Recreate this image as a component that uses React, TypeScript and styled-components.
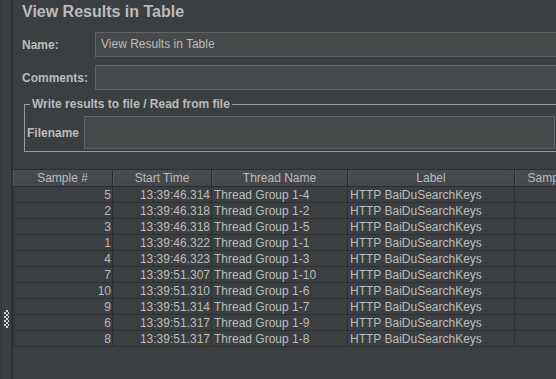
import React from 'react';
import styled, { createGlobalStyle } from 'styled-components';

const GlobalStyle = createGlobalStyle`
  html, body {
    margin: 0;
    padding: 0;
    background: #3c3f41;
  }
  body {
    font-family: "Liberation Sans", Arial, sans-serif;
    font-size: 12px;
    color: #bbbbbb;
  }
`;

const Window = styled.div`
  display: flex;
  width: 100vw;
  height: 100vh;
  overflow: hidden;
  background: #3c3f41;
`;

const Splitter = styled.div`
  flex: 0 0 13px;
  border-left: 2px solid #37393b;
  border-right: 2px solid #2d2f31;
  display: flex;
  justify-content: center;
  padding-top: 310px;
  box-sizing: border-box;
`;

const Grip = styled.div`
  width: 5px;
  height: 18px;
  background: repeating-conic-gradient(#d6d6d6 0 25%, #3c3f41 0 50%) 0 0 / 4px 4px;
`;

const Main = styled.div`
  flex: 1;
  min-width: 0;
  display: flex;
  flex-direction: column;
  overflow: hidden;
`;

const Form = styled.div`
  width: 560px;
  padding-left: 9px;
  display: flex;
  flex-direction: column;
`;

const Title = styled.h1`
  margin: 2px 0 0;
  font-size: 16px;
  line-height: 19px;
  font-weight: bold;
  white-space: nowrap;
`;

const Fields = styled.div`
  display: grid;
  grid-template-columns: 73px 1fr;
  row-gap: 8px;
  margin-top: 11px;
  align-items: center;
`;

const Label = styled.label`
  font-weight: bold;
  white-space: nowrap;
`;

const TextField = styled.div<{ $h?: number }>`
  height: ${(p) => p.$h ?? 25}px;
  box-sizing: border-box;
  border: 1px solid #646464;
  background: #45494a;
  padding: 0 5px;
  line-height: ${(p) => (p.$h ?? 25) - 2}px;
  white-space: nowrap;
  overflow: hidden;
`;

const Group = styled.fieldset`
  width: 535px;
  box-sizing: border-box;
  margin: 7px 0 0 2px;
  padding: 0 3px 2px 2px;
  border: 1px solid #9a9a9a;
  min-width: 0;
`;

const Legend = styled.legend`
  margin-left: 3px;
  padding: 0 2px;
  font-weight: bold;
  line-height: 14px;
  white-space: nowrap;
`;

const GroupRow = styled.div`
  display: flex;
  align-items: center;
  margin-top: 5px;
`;

const GroupLabel = styled(Label)`
  width: 57px;
  flex: 0 0 57px;
`;

const Grow = styled.div`
  flex: 1;
`;

const ScrollPane = styled.div`
  margin-top: 17px;
  flex: 1;
  overflow: hidden;
`;

const Table = styled.table`
  border-collapse: separate;
  border-spacing: 0;
  table-layout: fixed;
  width: 622px;
`;

const Th = styled.th<{ $w: number }>`
  width: ${(p) => p.$w}px;
  box-sizing: border-box;
  height: 18px;
  padding: 1px 2px 0;
  font-weight: normal;
  text-align: center;
  line-height: 15px;
  white-space: nowrap;
  overflow: hidden;
  background: linear-gradient(#4a4d4f, #43464a);
  border-top: 1px solid #2b2d2f;
  border-bottom: 1px solid #2b2d2f;
  border-right: 1px solid #2b2d2f;
  box-shadow: inset 1px 0 0 #54575a;
`;

const Td = styled.td<{ $align?: 'left' | 'right' }>`
  height: 16px;
  box-sizing: border-box;
  padding: 2px 1px 0 2px;
  line-height: 13px;
  text-align: ${(p) => p.$align ?? 'left'};
  white-space: nowrap;
  overflow: hidden;
  border-bottom: 1px solid #2e3032;
  border-right: 1px solid #2e3032;
  &:first-child {
    border-left: 2px solid #363839;
  }
`;

const columns = [
  { name: 'Sample #', w: 100 },
  { name: 'Start Time', w: 99 },
  { name: 'Thread Name', w: 136 },
  { name: 'Label', w: 167 },
  { name: 'Sample Time(ms)', w: 120 },
];

const rows = [
  { n: 5, t: '13:39:46.314', g: 'Thread Group 1-4' },
  { n: 2, t: '13:39:46.318', g: 'Thread Group 1-2' },
  { n: 3, t: '13:39:46.318', g: 'Thread Group 1-5' },
  { n: 1, t: '13:39:46.322', g: 'Thread Group 1-1' },
  { n: 4, t: '13:39:46.323', g: 'Thread Group 1-3' },
  { n: 7, t: '13:39:51.307', g: 'Thread Group 1-10' },
  { n: 10, t: '13:39:51.310', g: 'Thread Group 1-6' },
  { n: 9, t: '13:39:51.314', g: 'Thread Group 1-7' },
  { n: 6, t: '13:39:51.317', g: 'Thread Group 1-9' },
  { n: 8, t: '13:39:51.317', g: 'Thread Group 1-8' },
];

const App: React.FC = () => {
  return (
    <>
      <GlobalStyle />
      <Window>
        <Splitter>
          <Grip />
        </Splitter>
        <Main>
          <Form>
            <Title>View Results in Table</Title>
            <Fields>
              <Label>Name:</Label>
              <TextField>View Results in Table</TextField>
              <Label>Comments:</Label>
              <TextField />
            </Fields>
            <Group>
              <Legend>Write results to file / Read from file</Legend>
              <GroupRow>
                <GroupLabel>Filename</GroupLabel>
                <Grow>
                  <TextField $h={33} />
                </Grow>
              </GroupRow>
            </Group>
          </Form>
          <ScrollPane>
            <Table>
              <thead>
                <tr>
                  {columns.map((c) => (
                    <Th key={c.name} $w={c.w}>
                      {c.name}
                    </Th>
                  ))}
                </tr>
              </thead>
              <tbody>
                {rows.map((r) => (
                  <tr key={r.n}>
                    <Td $align="right">{r.n}</Td>
                    <Td $align="right">{r.t}</Td>
                    <Td>{r.g}</Td>
                    <Td>HTTP BaiDuSearchKeys</Td>
                    <Td />
                  </tr>
                ))}
              </tbody>
            </Table>
          </ScrollPane>
        </Main>
      </Window>
    </>
  );
};

export default App;
